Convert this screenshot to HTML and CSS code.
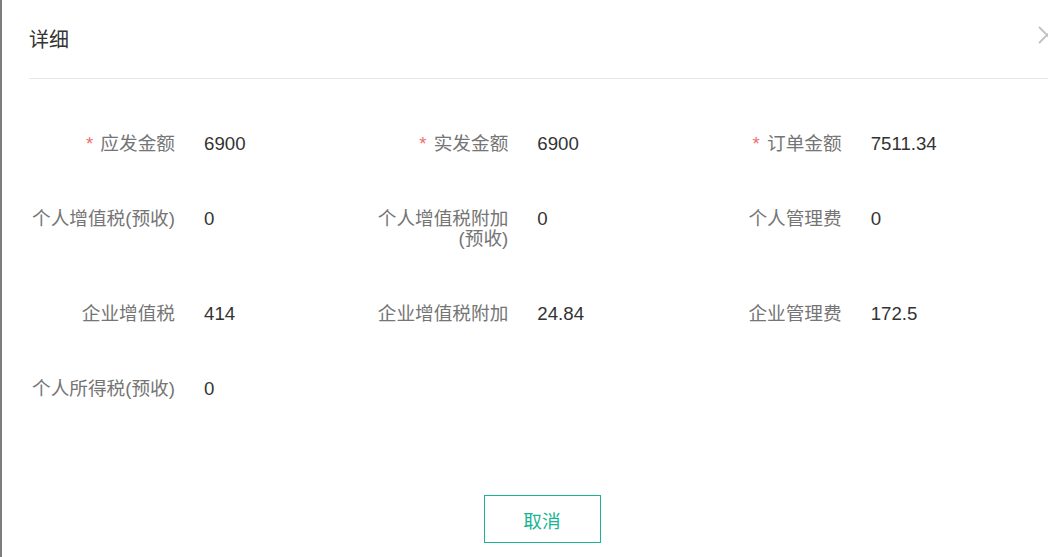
FILE: index.html
```html
<!DOCTYPE html>
<html lang="zh-CN">
<head>
<meta charset="utf-8">
<title>详细</title>
<link rel="stylesheet" href="styles.css">
</head>
<body>
<div class="dialog">
  <div class="dialog-header">
    <span class="dialog-title">详细</span>
    <svg class="dialog-close" width="18" height="18" viewBox="0 0 18 18"><path d="M1 1 L17 17 M17 1 L1 17" stroke="#c0c0c0" stroke-width="1.8" fill="none"/></svg>
  </div>
  <div class="dialog-body">
    <div class="form-grid">
      <div class="item"><div class="label"><span class="req">*</span> 应发金额</div><div class="value">6900</div></div>
      <div class="item"><div class="label"><span class="req">*</span> 实发金额</div><div class="value">6900</div></div>
      <div class="item"><div class="label"><span class="req">*</span> 订单金额</div><div class="value">7511.34</div></div>

      <div class="item"><div class="label">个人增值税(预收)</div><div class="value">0</div></div>
      <div class="item"><div class="label">个人增值税附加(预收)</div><div class="value">0</div></div>
      <div class="item"><div class="label">个人管理费</div><div class="value">0</div></div>

      <div class="item"><div class="label">企业增值税</div><div class="value">414</div></div>
      <div class="item"><div class="label">企业增值税附加</div><div class="value">24.84</div></div>
      <div class="item"><div class="label">企业管理费</div><div class="value">172.5</div></div>

      <div class="item"><div class="label">个人所得税(预收)</div><div class="value">0</div></div>
    </div>
  </div>
  <div class="dialog-footer">
    <button class="btn-cancel" type="button">取消</button>
  </div>
</div>
</body>
</html>
```

FILE: styles.css
```css
html, body {
  margin: 0;
  padding: 0;
  height: 100%;
  overflow: hidden;
}
body {
  background: #7d7d7d;
  font-family: "Liberation Sans", "Noto Sans CJK SC", sans-serif;
}
.dialog {
  position: relative;
  margin-left: 2px;
  width: 1080px;
  height: 100%;
  background: #fff;
}
.dialog-header {
  margin: 0 25px 0 27px;
  height: 78px;
  border-bottom: 1px solid #e8e8e8;
}
.dialog-title {
  display: block;
  padding-top: 28px;
  font-size: 20px;
  line-height: 24px;
  color: #333;
}
.dialog-close {
  position: absolute;
  left: 1036px;
  top: 26px;
}
.dialog-body {
  padding: 55px 0 0 23px;
}
.form-grid {
  display: grid;
  grid-template-columns: 333.33px 333.33px 333.33px;
  row-gap: 55px;
}
.item {
  display: flex;
  align-items: flex-start;
  font-size: 18.67px;
  line-height: 20px;
}
.label {
  width: 150px;
  text-align: right;
  color: #757575;
}
.req {
  color: #f56c6c;
  margin-right: 2px;
}
.value {
  margin-left: 29px;
  color: #333;
}
.dialog-footer {
  display: flex;
  justify-content: center;
  padding-top: 96px;
}
.btn-cancel {
  width: 117px;
  height: 48px;
  border: 1px solid #1ab394;
  background: #fff;
  color: #1ab394;
  font-family: "Liberation Sans", "Noto Sans CJK SC", sans-serif;
  font-size: 18.67px;
  padding: 0;
  border-radius: 0;
}
```
